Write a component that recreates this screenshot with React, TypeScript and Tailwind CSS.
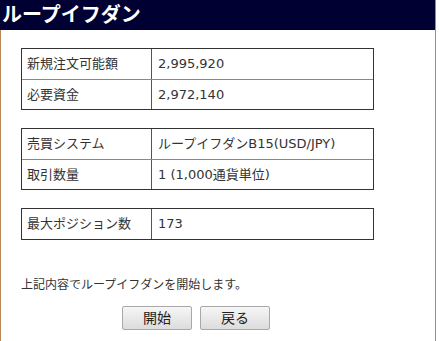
import React from "react";

const font = { fontFamily: '"DejaVu Sans", "Noto Sans CJK JP", sans-serif' };

function InfoTable({ rows }: { rows: [string, string][] }) {
  return (
    <div className="w-[353px] border border-[#333]">
      {rows.map(([label, value], i) => (
        <div
          key={label}
          className={`flex h-[30px] items-center ${i > 0 ? "border-t border-[#888]" : ""}`}
        >
          <div className="flex h-full w-[130px] items-center border-r border-[#555] pl-[5px]">{label}</div>
          <div className="pl-[6px]">{value}</div>
        </div>
      ))}
    </div>
  );
}

export default function App() {
  return (
    <div className="h-[341px] w-[436px] overflow-hidden border-r border-[#b8875b] bg-white text-[13px] text-[#333]" style={font}>
      <div className="flex h-[30px] items-center bg-[#000033] pl-[2px] text-[20px] font-bold leading-none text-white">
        ループイフダン
      </div>
      <div className="h-[311px] border-l border-[#b8875b] pl-[20px] pt-[18px]">
        <InfoTable rows={[["新規注文可能額", "2,995,920"], ["必要資金", "2,972,140"]]} />
        <div className="mt-[18px]">
          <InfoTable rows={[["売買システム", "ループイフダンB15(USD/JPY)"], ["取引数量", "1 (1,000通貨単位)"]]} />
        </div>
        <div className="mt-[18px]">
          <InfoTable rows={[["最大ポジション数", "173"]]} />
        </div>
        <p className="mt-[35px] text-[12px] leading-[20px]">上記内容でループイフダンを開始します。</p>
        <div className="mt-[11px] flex gap-[8px] pl-[101px]">
          <button className="h-[24px] w-[70px] rounded-[2px] border border-[#a8a8a8] bg-gradient-to-b from-[#f6f6f6] to-[#dcdcdc] text-[14px] text-[#222]">開始</button>
          <button className="h-[24px] w-[70px] rounded-[2px] border border-[#a8a8a8] bg-gradient-to-b from-[#f6f6f6] to-[#dcdcdc] text-[14px] text-[#222]">戻る</button>
        </div>
      </div>
    </div>
  );
}
